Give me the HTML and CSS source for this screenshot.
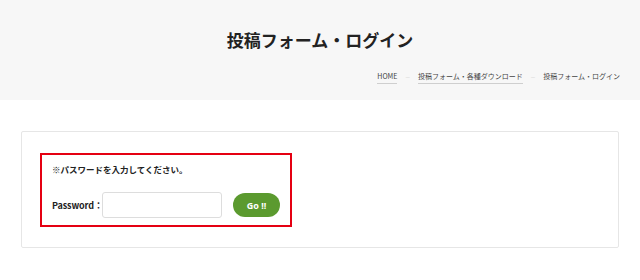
FILE: index.html
```html
<!DOCTYPE html>
<html lang="ja">
<head>
    <meta charset="UTF-8">
    <title>投稿フォーム・ログイン</title>
    <link rel="stylesheet" href="styles.css">
</head>
<body>
    <header class="page-header">
        <h1 class="page-title">投稿フォーム・ログイン</h1>
        <nav class="breadcrumb">
            <a class="crumb-link" href="#">HOME</a>
            <span class="crumb-sep">—</span>
            <a class="crumb-link" href="#">投稿フォーム・各種ダウンロード</a>
            <span class="crumb-sep">—</span>
            <span class="crumb-current">投稿フォーム・ログイン</span>
        </nav>
    </header>
    <main class="content">
        <div class="card">
            <form class="login-box" onsubmit="return false">
                <p class="login-note">※パスワードを入力してください。</p>
                <div class="login-row">
                    <label class="login-label" for="pw">Password：</label>
                    <input class="login-input" id="pw" type="password">
                    <button class="login-button" type="submit">Go !!</button>
                </div>
            </form>
        </div>
    </main>
</body>
</html>
```

FILE: styles.css
```css
body {
    margin: 0;
    font-family: "Noto Sans CJK JP", "Noto Sans", sans-serif;
    background-color: #ffffff;
    color: #222222;
}
.page-header {
    background-color: #f7f7f7;
    height: 100px;
    box-sizing: border-box;
    padding-top: 27px;
}
.page-title {
    margin: 0;
    text-align: center;
    font-size: 17px;
    line-height: 26px;
    font-weight: 700;
}
.breadcrumb {
    display: flex;
    justify-content: flex-end;
    align-items: baseline;
    gap: 8px;
    padding-right: 20px;
    margin-top: 17px;
    font-size: 7px;
    line-height: 12px;
    color: #444444;
}
.crumb-link {
    color: #444444;
    text-decoration: none;
    border-bottom: 1px solid #cfcfcf;
    padding-bottom: 1px;
}
.crumb-sep {
    color: #c8c8c8;
    font-size: 5px;
}
.content {
    padding: 31px 21px 0;
}
.card {
    border: 1px solid #e6e6e6;
    border-radius: 2px;
    height: 117px;
    box-sizing: border-box;
    padding: 21px 18px;
}
.login-box {
    width: 252px;
    height: 74px;
    box-sizing: border-box;
    border: 2px solid #e50012;
    padding: 7px 10px 0;
}
.login-note {
    margin: 0;
    font-size: 8.5px;
    line-height: 14px;
    font-weight: 700;
}
.login-row {
    display: flex;
    align-items: center;
    margin-top: 16px;
}
.login-label {
    font-size: 9px;
    font-weight: 700;
    width: 50px;
    white-space: nowrap;
    letter-spacing: -0.1px;
}
.login-input {
    width: 120px;
    height: 26px;
    box-sizing: border-box;
    border: 1px solid #dddddd;
    border-radius: 3px;
    margin: 0;
}
.login-button {
    margin-left: 11px;
    width: 51px;
    height: 24px;
    padding: 0;
    border: none;
    border-radius: 12px;
    background-color: #5b9a2f;
    color: #ffffff;
    font-family: "Noto Sans", sans-serif;
    font-size: 9px;
    font-weight: 700;
}
```
